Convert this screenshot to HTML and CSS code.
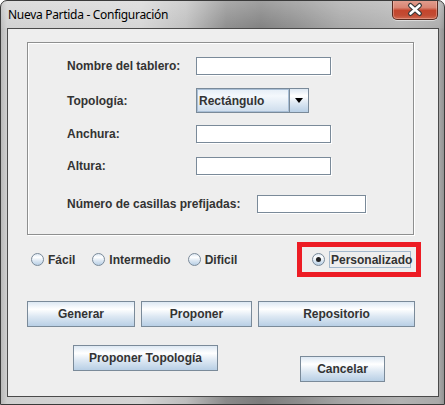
FILE: index.html
```html
<!DOCTYPE html>
<html>
<head>
<meta charset="utf-8">
<link rel="stylesheet" href="styles.css">
</head>
<body>
<div class="window">
  <div class="titlebar">
    <span class="title">Nueva Partida - Configuración</span>
    <div class="close">
      <svg width="44" height="19" viewBox="0 0 44 19">
        <path d="M17.5 5.5 L26.5 13.5 M26.5 5.5 L17.5 13.5" stroke="#3a3a3a" stroke-width="5" stroke-linecap="round" fill="none"/>
        <path d="M17.5 5.5 L26.5 13.5 M26.5 5.5 L17.5 13.5" stroke="#ffffff" stroke-width="2.6" stroke-linecap="round" fill="none"/>
      </svg>
    </div>
  </div>
  <div class="client">
    <div class="panel">
      <div class="row r1"><span class="lbl">Nombre del tablero:</span><div class="field"></div></div>
      <div class="row r2"><span class="lbl">Topología:</span>
        <div class="combo"><div class="combo-val">Rectángulo</div><div class="combo-btn"><span class="tri"></span></div></div>
      </div>
      <div class="row r3"><span class="lbl">Anchura:</span><div class="field"></div></div>
      <div class="row r4"><span class="lbl">Altura:</span><div class="field"></div></div>
      <div class="row r5"><span class="lbl wide">Número de casillas prefijadas:</span><div class="field short"></div></div>
    </div>
    <div class="radios">
      <div class="opt"><span class="radio"></span><span>Fácil</span></div>
      <div class="opt"><span class="radio"></span><span>Intermedio</span></div>
      <div class="opt"><span class="radio"></span><span>Dificil</span></div>
      <div class="hl">
        <div class="opt sel"><span class="radio on"></span><span class="focus">Personalizado</span></div>
      </div>
    </div>
    <div class="btnrow1">
      <button class="btn w-gen">Generar</button>
      <button class="btn w-prop">Proponer</button>
      <button class="btn w-repo">Repositorio</button>
    </div>
    <div class="btnrow2">
      <button class="btn w-topo">Proponer Topología</button>
      <button class="btn w-cancel">Cancelar</button>
    </div>
  </div>
</div>
</body>
</html>
```
FILE: styles.css
```css
* { box-sizing: border-box; }
html, body { margin: 0; padding: 0; background: #ffffff; }

.window {
  width: 445px;
  height: 405px;
  border: 1px solid #3a3a3a;
  border-radius: 7px 7px 0 0;
  overflow: hidden;
  background:
    linear-gradient(180deg, rgba(255,255,255,0.28) 0px, rgba(255,255,255,0.05) 27px, rgba(0,0,0,0) 28px),
    linear-gradient(90deg, #b9b9b9 0px, #d0d0d0 6px, #d4d4d4 140px, #bdbdbd 185px, #8a8a8a 225px, #7c7c7c 260px, #8e8e8e 300px, #a4a4a4 340px, #b2b2b2 400px, #a9a9a9 438px, #8a8a8a 445px);
  font-family: "Liberation Sans", Arial, sans-serif;
}

.titlebar {
  height: 27px;
  display: flex;
  align-items: flex-start;
}
.title {
  font-family: "Noto Sans", "Liberation Sans", sans-serif;
  font-size: 12px;
  color: #000;
  padding-left: 7px;
  padding-top: 5px;
  line-height: 17px;
  letter-spacing: -0.3px;
}
.close {
  margin-left: auto;
  margin-right: 6px;
  margin-top: -1px;
  width: 46px;
  height: 20px;
  border: 1px solid #5a2a20;
  border-top: none;
  border-radius: 0 0 5px 5px;
  background: linear-gradient(180deg, #e3a091 0%, #d98573 40%, #c4452d 55%, #c24b33 80%, #d06a52 100%);
  box-shadow: inset 0 0 0 1px rgba(255,220,210,0.35), 0 1px 0 rgba(255,255,255,0.5);
  display: flex;
  align-items: center;
  justify-content: center;
}
.close svg { display: block; }

.client {
  margin-left: 6px;
  width: 432px;
  height: 369px;
  border: 1px solid #4a4a4a;
  background: #eeeeee;
  color: #333333;
  font-size: 12px;
  font-weight: bold;
  padding-top: 13px;
}

.panel {
  margin-left: 19px;
  width: 387px;
  height: 193px;
  border: 1px solid #8e8f8f;
  box-shadow: inset 1px 1px 0 #ffffff, 1px 1px 0 #ffffff;
  padding: 14px 0 0 39px;
}
.row { display: flex; align-items: center; }
.r1 { height: 18px; }
.r2 { height: 25px; margin-top: 13px; }
.r3 { height: 18px; margin-top: 12px; }
.r4 { height: 18px; margin-top: 14px; }
.r5 { height: 18px; margin-top: 20px; }
.lbl { width: 129px; white-space: nowrap; }
.lbl.wide { width: 190px; }

.field {
  width: 135px;
  height: 18px;
  background: #ffffff;
  border: 1px solid #7a8a99;
  box-shadow: 1px 1px 0 #ffffff;
}
.field.short { width: 109px; }

.combo {
  display: flex;
  width: 113px;
  height: 25px;
  border: 1px solid #7a8a99;
}
.combo-val {
  flex: 1;
  display: flex;
  align-items: center;
  padding-left: 2px;
  background: linear-gradient(180deg, #e4edf6 0%, #f4f8fc 30%, #e4edf6 60%, #cddcec 100%);
  box-shadow: inset 0 0 0 1px #a9bfd6;
}
.combo-btn {
  width: 19px;
  border-left: 1px solid #7a8a99;
  background: linear-gradient(180deg, #dde8f3 0%, #ffffff 30%, #dde8f3 60%, #b8cfe5 100%);
  display: flex;
  align-items: center;
  justify-content: center;
}
.tri {
  width: 0;
  height: 0;
  border-left: 4.5px solid transparent;
  border-right: 4.5px solid transparent;
  border-top: 5px solid #000000;
}

.radios {
  display: flex;
  align-items: center;
  margin-top: 7px;
  height: 35px;
  padding-left: 23px;
  gap: 17px;
}
.opt { display: flex; align-items: center; gap: 4px; }
.radio {
  width: 13px;
  height: 13px;
  border-radius: 50%;
  border: 1px solid #7a8a99;
  background: linear-gradient(180deg, #dde8f3 0%, #ffffff 30%, #dde8f3 60%, #b8cfe5 100%);
  display: flex;
  align-items: center;
  justify-content: center;
}
.radio.on::after {
  content: "";
  width: 5px;
  height: 5px;
  border-radius: 50%;
  background: #222222;
}
.hl {
  margin-left: auto;
  margin-right: 17px;
  height: 35px;
  border: 5px solid #ed1c24;
  padding: 0 5px 0 10px;
  display: flex;
  align-items: center;
}
.opt.sel { gap: 4px; }
.focus {
  width: 82px;
  height: 17px;
  border: 1px solid #a3b8cc;
  padding-left: 1px;
  display: flex;
  align-items: center;
}

.btn {
  height: 26px;
  padding: 0;
  margin: 0;
  border: 1px solid #7a8a99;
  border-radius: 0;
  background: linear-gradient(180deg, #dde8f3 0%, #ffffff 30%, #dde8f3 60%, #b8cfe5 100%);
  font-family: "Liberation Sans", Arial, sans-serif;
  font-size: 12px;
  font-weight: bold;
  color: #333333;
  display: flex;
  align-items: center;
  justify-content: center;
}
.btnrow1 {
  display: flex;
  gap: 6px;
  margin-top: 24px;
  padding-left: 19px;
}
.w-gen { width: 108px; }
.w-prop { width: 111px; }
.w-repo { width: 157px; }
.btnrow2 {
  display: flex;
  align-items: flex-start;
  margin-top: 18px;
  padding-left: 65px;
}
.w-topo { width: 145px; }
.w-cancel { width: 85px; margin-left: 82px; margin-top: 11px; }
```
